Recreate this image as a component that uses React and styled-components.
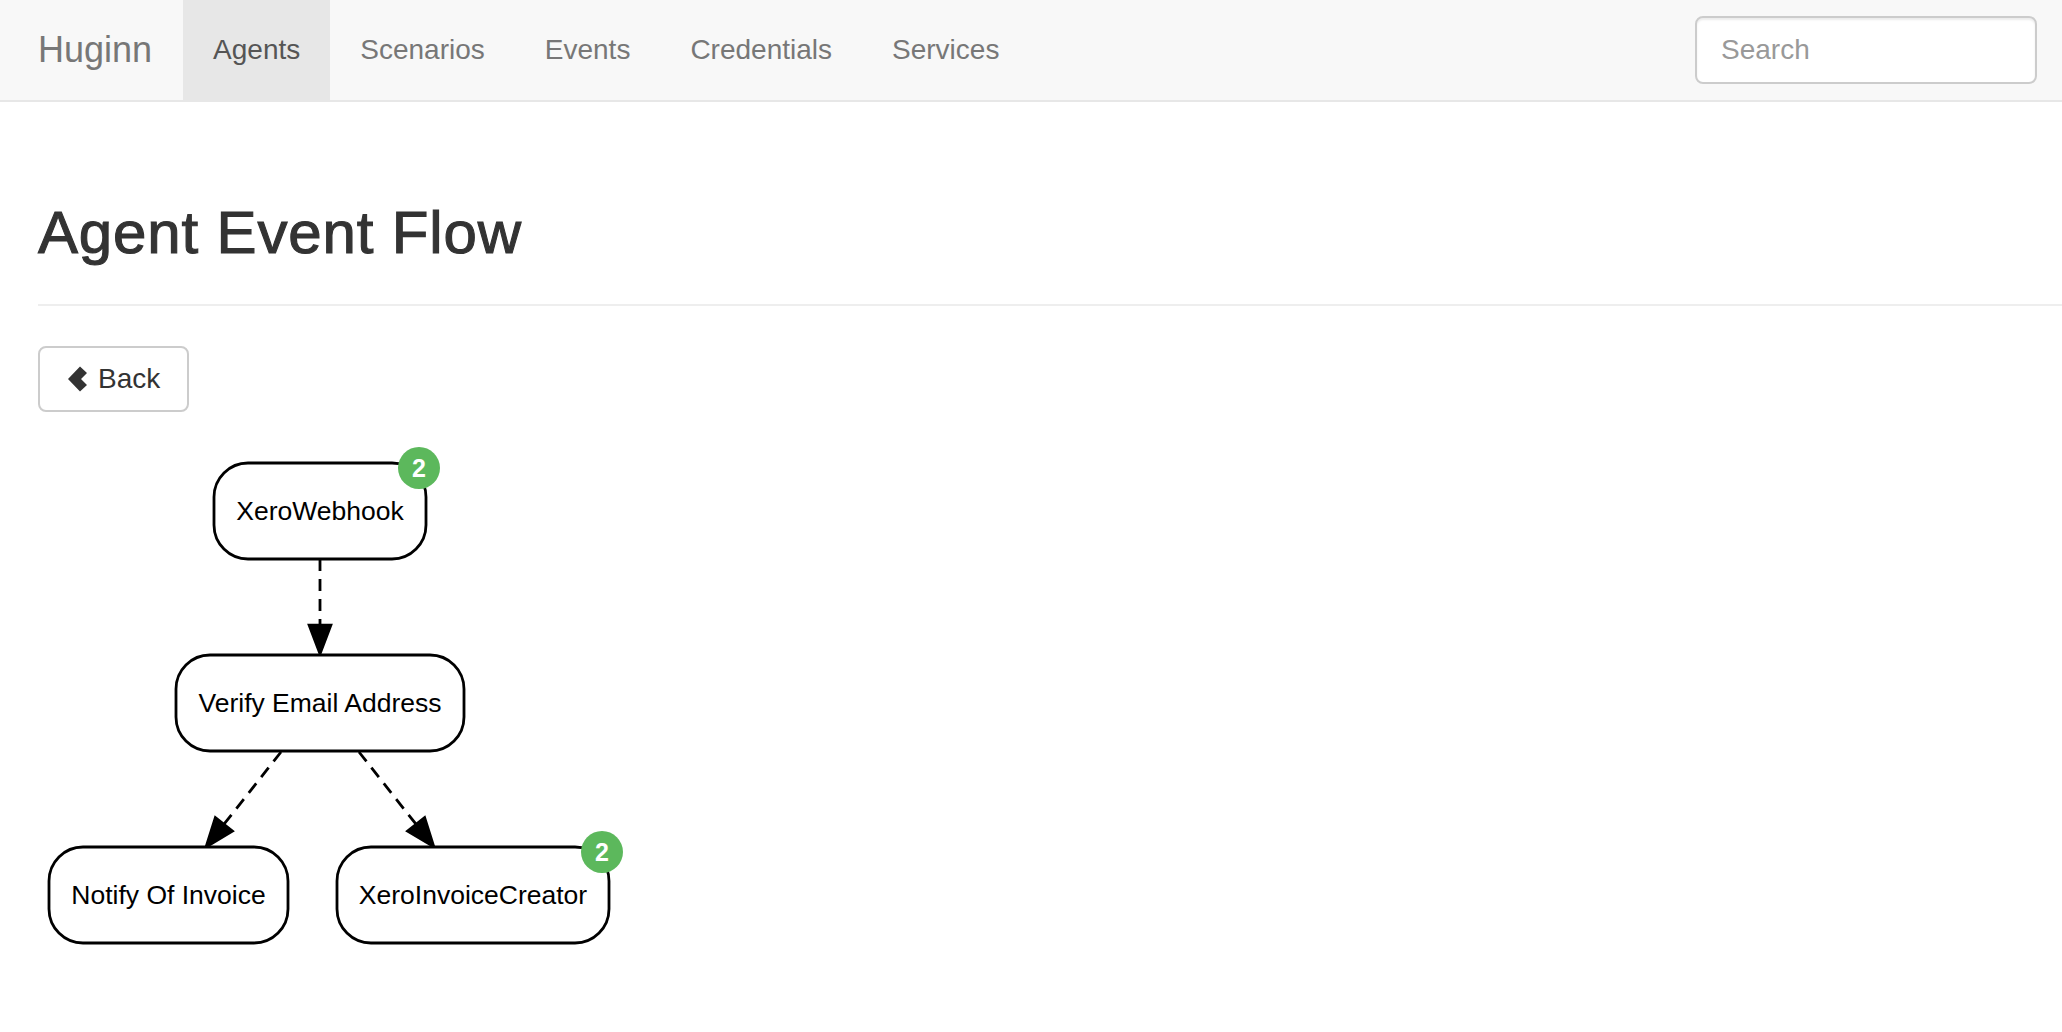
import React from "react";
import styled, { createGlobalStyle } from "styled-components";

const GlobalStyle = createGlobalStyle`
    html, body {
        margin: 0;
        padding: 0;
        background: #fff;
        font-family: "Liberation Sans", Arial, sans-serif;
        color: #333;
    }
`;

const Navbar = styled.nav`
    height: 100px;
    background: #f8f8f8;
    border-bottom: 2px solid #e7e7e7;
    display: flex;
    align-items: stretch;
    justify-content: space-between;
`;

const NavLeft = styled.div`
    display: flex;
    align-items: stretch;
`;

const Brand = styled.a`
    display: flex;
    align-items: center;
    padding: 0 31px 0 38px;
    font-size: 36px;
    color: #777;
    text-decoration: none;
`;

const NavItem = styled.a`
    display: flex;
    align-items: center;
    padding: 0 30px;
    font-size: 28px;
    color: ${(props) => (props.active ? "#555" : "#777")};
    background: ${(props) => (props.active ? "#e7e7e7" : "transparent")};
    text-decoration: none;
`;

const SearchBox = styled.input`
    align-self: center;
    width: 342px;
    height: 68px;
    box-sizing: border-box;
    margin-right: 25px;
    padding: 0 24px;
    border: 2px solid #ccc;
    border-radius: 8px;
    background: #fff;
    font-family: "Liberation Sans", Arial, sans-serif;
    font-size: 28px;
    color: #555;
    outline: none;
    box-shadow: inset 0 2px 2px rgba(0, 0, 0, 0.075);
    &::placeholder {
        color: #999;
    }
`;

const Content = styled.div`
    padding-left: 38px;
`;

const PageHeader = styled.div`
    margin-top: 98px;
    padding-bottom: 18px;
    border-bottom: 2px solid #eee;
`;

const Title = styled.h2`
    margin: 0 0 20px;
    font-size: 60px;
    line-height: 66px;
    font-weight: 500;
    letter-spacing: 0.85px;
    color: #333;
    -webkit-text-stroke: 1.1px #333;
`;

const BackButton = styled.button`
    margin-top: 40px;
    height: 66px;
    width: 151px;
    box-sizing: border-box;
    display: flex;
    align-items: center;
    gap: 10px;
    padding: 0 20px 0 28px;
    border: 2px solid #ccc;
    border-radius: 8px;
    background: #fff;
    font-family: "Liberation Sans", Arial, sans-serif;
    font-size: 28px;
    color: #333;
`;

const Graph = styled.svg`
    display: block;
    margin-top: 18px;
`;

const nodes = [
    { label: "XeroWebhook", x: 214, y: 463, w: 212, h: 96, badge: 2 },
    { label: "Verify Email Address", x: 176, y: 655, w: 288, h: 96 },
    { label: "Notify Of Invoice", x: 49, y: 847, w: 239, h: 96 },
    { label: "XeroInvoiceCreator", x: 337, y: 847, w: 272, h: 96, badge: 2 },
];

const edges = [
    { from: [320, 559], to: [320, 654] },
    { from: [281, 752], to: [206, 847] },
    { from: [359, 752], to: [434, 847] },
];

function Edge({ from, to }) {
    const dx = to[0] - from[0];
    const dy = to[1] - from[1];
    const len = Math.sqrt(dx * dx + dy * dy);
    const ux = dx / len;
    const uy = dy / len;
    const bx = to[0] - ux * 29;
    const by = to[1] - uy * 29;
    const px = -uy * 11;
    const py = ux * 11;
    return (
        <g>
            <line x1={from[0]} y1={from[1]} x2={bx} y2={by} stroke="#000" strokeWidth="2.8" strokeDasharray="12,8" />
            <polygon points={`${to[0]},${to[1]} ${bx + px},${by + py} ${bx - px},${by - py}`} fill="#000" stroke="#000" strokeWidth="2.6" strokeLinejoin="miter" />
        </g>
    );
}

function AgentNode({ label, x, y, w, h, badge }) {
    return (
        <g>
            <rect x={x} y={y} width={w} height={h} rx="34" ry="34" fill="#fff" stroke="#000" strokeWidth="2.8" />
            <text x={x + w / 2} y={y + h / 2 + 9} textAnchor="middle" fontFamily="Liberation Sans, Arial, sans-serif" fontSize="26.5" fill="#000">
                {label}
            </text>
            {badge && (
                <g>
                    <circle cx={x + w - 7} cy={y + 5} r="21" fill="#5cb85c" />
                    <text x={x + w - 7} y={y + 14} textAnchor="middle" fontFamily="Liberation Sans, Arial, sans-serif" fontWeight="bold" fontSize="25" fill="#fff">
                        {badge}
                    </text>
                </g>
            )}
        </g>
    );
}

function ChevronLeft() {
    return (
        <svg width="20" height="26" viewBox="0 0 20 26">
            <polygon points="12,0.5 19,7 13,13 19,19 12,25.5 0,13" fill="#333" />
        </svg>
    );
}

export default function App() {
    return (
        <>
            <GlobalStyle />
            <Navbar>
                <NavLeft>
                    <Brand href="#">Huginn</Brand>
                    <NavItem href="#" active>Agents</NavItem>
                    <NavItem href="#">Scenarios</NavItem>
                    <NavItem href="#">Events</NavItem>
                    <NavItem href="#">Credentials</NavItem>
                    <NavItem href="#">Services</NavItem>
                </NavLeft>
                <SearchBox placeholder="Search" />
            </Navbar>
            <Content>
                <PageHeader>
                    <Title>Agent Event Flow</Title>
                </PageHeader>
                <BackButton>
                    <ChevronLeft />
                    Back
                </BackButton>
                <Graph width="600" height="540" viewBox="38 430 600 540">
                    {edges.map((e, i) => (
                        <Edge key={i} {...e} />
                    ))}
                    {nodes.map((n) => (
                        <AgentNode key={n.label} {...n} />
                    ))}
                </Graph>
            </Content>
        </>
    );
}
